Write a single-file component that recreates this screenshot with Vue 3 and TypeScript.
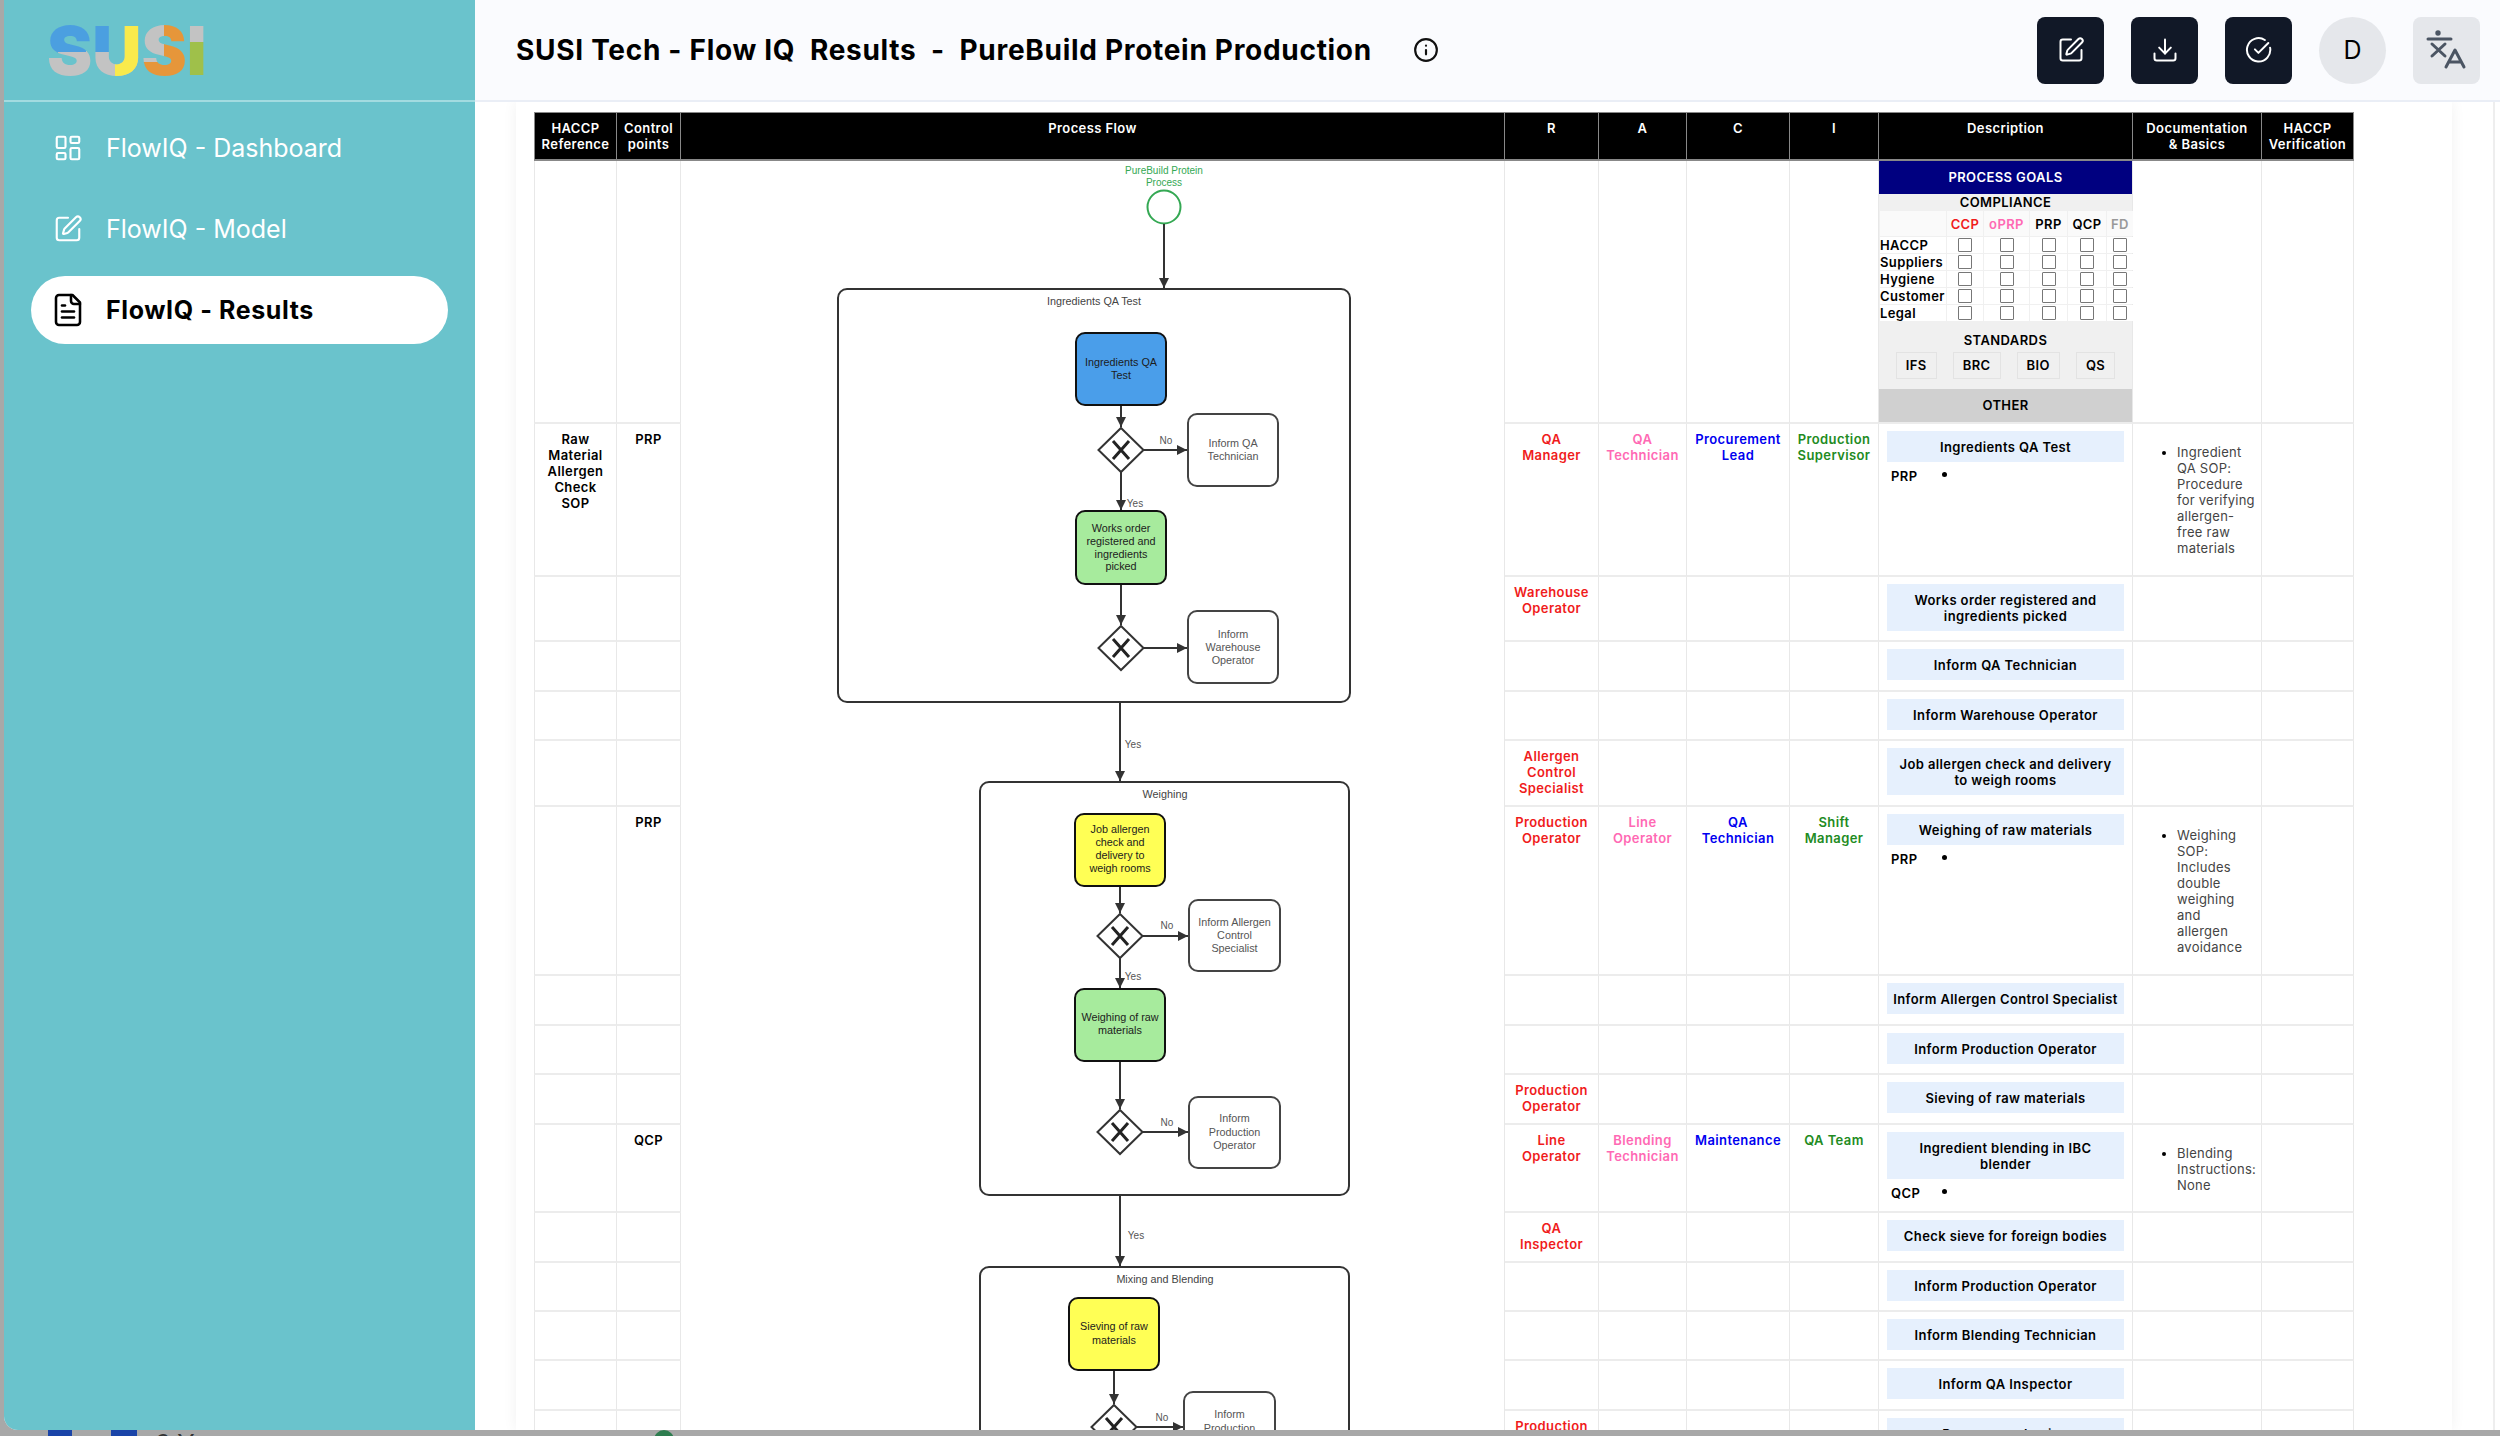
<script setup lang="ts">
interface Row {
  h: number
  haccp?: string
  cp?: string
  r?: string
  a?: string
  c?: string
  i?: string
  desc?: string
  tag?: string
  doc?: string[]
  goals?: boolean
}

interface Shape {
  x: number
  y: number
  w: number
  h: number
  fill: string
  lines: string[]
  ys: number[]
}

const pageTitle = 'SUSI Tech - Flow IQ  Results  -  PureBuild Protein Production'

const rows: Row[] = [
  { h: 262, goals: true },
  {
    h: 153,
    haccp: 'Raw Material Allergen Check SOP',
    cp: 'PRP',
    r: 'QA Manager',
    a: 'QA Technician',
    c: 'Procurement Lead',
    i: 'Production Supervisor',
    desc: 'Ingredients QA Test',
    tag: 'PRP',
    doc: ['Ingredient', 'QA SOP:', 'Procedure', 'for verifying', 'allergen-', 'free raw', 'materials'],
  },
  { h: 65, r: 'Warehouse Operator', desc: 'Works order registered and ingredients picked' },
  { h: 50, desc: 'Inform QA Technician' },
  { h: 49, desc: 'Inform Warehouse Operator' },
  { h: 66, r: 'Allergen Control Specialist', desc: 'Job allergen check and delivery to weigh rooms' },
  {
    h: 169,
    cp: 'PRP',
    r: 'Production Operator',
    a: 'Line Operator',
    c: 'QA Technician',
    i: 'Shift Manager',
    desc: 'Weighing of raw materials',
    tag: 'PRP',
    doc: ['Weighing', 'SOP:', 'Includes', 'double', 'weighing', 'and', 'allergen', 'avoidance'],
  },
  { h: 50, desc: 'Inform Allergen Control Specialist' },
  { h: 49, desc: 'Inform Production Operator' },
  { h: 50, r: 'Production Operator', desc: 'Sieving of raw materials' },
  {
    h: 88,
    cp: 'QCP',
    r: 'Line Operator',
    a: 'Blending Technician',
    c: 'Maintenance',
    i: 'QA Team',
    desc: 'Ingredient blending in IBC blender',
    tag: 'QCP',
    doc: ['Blending', 'Instructions:', 'None'],
  },
  { h: 50, r: 'QA Inspector', desc: 'Check sieve for foreign bodies' },
  { h: 49, desc: 'Inform Production Operator' },
  { h: 49, desc: 'Inform Blending Technician' },
  { h: 50, desc: 'Inform QA Inspector' },
  { h: 60, r: 'Production Operator', desc: 'Process packaging' },
]

const columns = [
  { key: 'haccp', title: 'HACCP Reference', width: 83 },
  { key: 'cp', title: 'Control points', width: 64 },
  { key: 'flow', title: 'Process Flow', width: 824 },
  { key: 'r', title: 'R', width: 94 },
  { key: 'a', title: 'A', width: 88 },
  { key: 'c', title: 'C', width: 103 },
  { key: 'i', title: 'I', width: 89 },
  { key: 'desc', title: 'Description', width: 254 },
  { key: 'doc', title: 'Documentation &\u00a0Basics', width: 129 },
  { key: 'ver', title: 'HACCP Verification', width: 92 },
]

const checkRows = ['HACCP', 'Suppliers', 'Hygiene', 'Customer', 'Legal']
const checkCols = [
  { name: 'CCP', cls: 'ccp' },
  { name: 'oPRP', cls: 'oprp' },
  { name: 'PRP', cls: '' },
  { name: 'QCP', cls: '' },
  { name: 'FD', cls: 'fd' },
]
const standards = ['IFS', 'BRC', 'BIO', 'QS']

const BLUE = '#4a9eea'
const GREEN = '#a7eb9d'
const YELLOW = '#ffff55'

const tasks: Shape[] = [
  { x: 1076, y: 333, w: 90, h: 72, fill: BLUE, lines: ['Ingredients QA', 'Test'], ys: [362, 375] },
  { x: 1188, y: 414, w: 90, h: 72, fill: '#fff', lines: ['Inform QA', 'Technician'], ys: [443, 456] },
  { x: 1076, y: 511, w: 90, h: 73, fill: GREEN, lines: ['Works order', 'registered and', 'ingredients', 'picked'], ys: [528, 541, 554, 566] },
  { x: 1188, y: 611, w: 90, h: 72, fill: '#fff', lines: ['Inform', 'Warehouse', 'Operator'], ys: [634, 647, 660] },
  { x: 1075, y: 814, w: 90, h: 72, fill: YELLOW, lines: ['Job allergen', 'check and', 'delivery to', 'weigh rooms'], ys: [829, 842, 855, 868] },
  { x: 1189, y: 900, w: 91, h: 71, fill: '#fff', lines: ['Inform Allergen', 'Control', 'Specialist'], ys: [922, 935, 948] },
  { x: 1075, y: 989, w: 90, h: 72, fill: GREEN, lines: ['Weighing of raw', 'materials'], ys: [1017, 1030] },
  { x: 1189, y: 1097, w: 91, h: 71, fill: '#fff', lines: ['Inform', 'Production', 'Operator'], ys: [1118, 1132, 1145] },
  { x: 1069, y: 1298, w: 90, h: 72, fill: YELLOW, lines: ['Sieving of raw', 'materials'], ys: [1326, 1340] },
  { x: 1184, y: 1392, w: 91, h: 72, fill: '#fff', lines: ['Inform', 'Production', 'Operator'], ys: [1414, 1428, 1441] },
]

const groups = [
  { x: 838, y: 289, w: 512, h: 413, title: 'Ingredients QA Test', tx: 1094, ty: 301 },
  { x: 980, y: 782, w: 369, h: 413, title: 'Weighing', tx: 1165, ty: 794 },
  { x: 980, y: 1267, w: 369, h: 300, title: 'Mixing and Blending', tx: 1165, ty: 1279 },
]

const diamonds = [
  { x: 1121, y: 450 },
  { x: 1121, y: 648 },
  { x: 1120, y: 936 },
  { x: 1120, y: 1132 },
  { x: 1114, y: 1427 },
]

const arrows = [
  [1164, 224, 1164, 288],
  [1121, 405, 1121, 427],
  [1143, 450, 1187, 450],
  [1121, 472, 1121, 510],
  [1121, 584, 1121, 625],
  [1143, 648, 1187, 648],
  [1120, 702, 1120, 781],
  [1120, 886, 1120, 913],
  [1142, 936, 1188, 936],
  [1120, 958, 1120, 988],
  [1120, 1061, 1120, 1109],
  [1142, 1132, 1188, 1132],
  [1120, 1195, 1120, 1266],
  [1114, 1370, 1114, 1404],
  [1136, 1427, 1183, 1427],
]

const edgeLabels = [
  { x: 1166, y: 440, t: 'No' },
  { x: 1135, y: 503, t: 'Yes' },
  { x: 1133, y: 744, t: 'Yes' },
  { x: 1167, y: 925, t: 'No' },
  { x: 1133, y: 976, t: 'Yes' },
  { x: 1167, y: 1122, t: 'No' },
  { x: 1136, y: 1235, t: 'Yes' },
  { x: 1162, y: 1417, t: 'No' },
]

const flowHeight = rows.reduce((sum, row) => sum + row.h, 0)
</script>

<template>
  <div class="screen">
    <div class="window">
      <aside class="sidebar">
        <div class="logo">
          <span class="l-s1">S</span><span class="l-u">U</span><span class="l-s2">S</span><span class="l-i">I</span>
        </div>
        <nav class="nav">
          <a class="nav-item">
            <svg class="nav-icon" viewBox="0 0 24 24" fill="none" stroke="currentColor" stroke-width="1.700" stroke-linecap="round" stroke-linejoin="round">
              <rect x="3" y="3" width="7" height="9" rx="1" />
              <rect x="14" y="3" width="7" height="5" rx="1" />
              <rect x="14" y="12" width="7" height="9" rx="1" />
              <rect x="3" y="16" width="7" height="5" rx="1" />
            </svg>
            FlowIQ - Dashboard
          </a>
          <a class="nav-item">
            <svg class="nav-icon" viewBox="0 0 24 24" fill="none" stroke="currentColor" stroke-width="1.700" stroke-linecap="round" stroke-linejoin="round">
              <path d="M12 3H5a2 2 0 0 0-2 2v14a2 2 0 0 0 2 2h14a2 2 0 0 0 2-2v-7" />
              <path d="M18.375 2.625a1 1 0 0 1 3 3l-9.013 9.014a2 2 0 0 1-.853.505l-2.873.84a.5.5 0 0 1-.62-.62l.84-2.873a2 2 0 0 1 .506-.852z" />
            </svg>
            FlowIQ - Model
          </a>
          <a class="nav-item active">
            <svg class="nav-icon big" viewBox="0 0 24 24" fill="none" stroke="currentColor" stroke-width="1.700" stroke-linecap="round" stroke-linejoin="round">
              <path d="M15 2H6a2 2 0 0 0-2 2v16a2 2 0 0 0 2 2h12a2 2 0 0 0 2-2V7Z" />
              <path d="M14 2v4a2 2 0 0 0 2 2h4" />
              <path d="M10 9H8" />
              <path d="M16 13H8" />
              <path d="M16 17H8" />
            </svg>
            FlowIQ - Results
          </a>
        </nav>
      </aside>

      <div class="main">
        <header class="header">
          <h1 class="title">{{ pageTitle }}</h1>
          <svg class="info" viewBox="0 0 24 24" fill="none" stroke="#111" stroke-width="2" stroke-linecap="round" stroke-linejoin="round">
            <circle cx="12" cy="12" r="10" />
            <path d="M12 16v-4" />
            <path d="M12 8h.01" />
          </svg>
          <div class="actions">
            <button class="btn">
              <svg viewBox="0 0 24 24" fill="none" stroke="#fff" stroke-width="1.700" stroke-linecap="round" stroke-linejoin="round">
                <path d="M12 3H5a2 2 0 0 0-2 2v14a2 2 0 0 0 2 2h14a2 2 0 0 0 2-2v-7" />
                <path d="M18.375 2.625a1 1 0 0 1 3 3l-9.013 9.014a2 2 0 0 1-.853.505l-2.873.84a.5.5 0 0 1-.62-.62l.84-2.873a2 2 0 0 1 .506-.852z" />
              </svg>
            </button>
            <button class="btn">
              <svg viewBox="0 0 24 24" fill="none" stroke="#fff" stroke-width="1.700" stroke-linecap="round" stroke-linejoin="round">
                <path d="M3 15v4a2 2 0 0 0 2 2h14a2 2 0 0 0 2-2v-4" />
                <path d="M7 10l5 5 5-5" />
                <path d="M12 15V3" />
              </svg>
            </button>
            <button class="btn">
              <svg viewBox="0 0 24 24" fill="none" stroke="#fff" stroke-width="1.700" stroke-linecap="round" stroke-linejoin="round">
                <path d="M21.500 10A10 10 0 1 1 17 3.400" />
                <path d="M8.500 11.500l3 3L20 6" />
              </svg>
            </button>
            <div class="avatar">D</div>
            <button class="btn lang">
              <svg viewBox="0 0 67 67" fill="none" stroke="#4b5563" stroke-width="3" stroke-linecap="round" stroke-linejoin="round">
                <circle cx="25" cy="16" r="1.200" fill="#4b5563" />
                <path d="M15 22h23" />
                <path d="M19 27l13 12M32 27L19 39" />
                <path d="M33 50l9-17 9 17M36.500 45h11" />
              </svg>
            </button>
          </div>
        </header>

        <div class="body">
          <div class="card">
            <table class="grid">
              <colgroup>
                <col v-for="col in columns" :key="col.key" :style="{ width: col.width + 'px' }" />
              </colgroup>
              <thead>
                <tr>
                  <th v-for="col in columns" :key="col.key">{{ col.title }}</th>
                </tr>
              </thead>
              <tbody>
                <tr v-for="(row, idx) in rows" :key="idx" :style="{ height: row.h + 'px' }">
                  <td class="strong">{{ row.haccp }}</td>
                  <td class="strong">{{ row.cp }}</td>
                  <td v-if="idx === 0" :rowspan="rows.length" class="flow">
                    <svg class="chart" width="824" :height="flowHeight" :viewBox="`681 161 824 ${flowHeight}`">
                      <defs>
                        <marker id="head" markerUnits="userSpaceOnUse" markerWidth="11" markerHeight="10" refX="10" refY="5" orient="auto">
                          <path d="M0 0L10 5L0 10Z" fill="#333" />
                        </marker>
                      </defs>
                      <text class="start-label" x="1164" y="170">PureBuild Protein</text>
                      <text class="start-label" x="1164" y="182">Process</text>
                      <circle cx="1164" cy="207" r="16.500" fill="#fff" stroke="#34a853" stroke-width="2" />
                      <g v-for="g in groups" :key="g.title">
                        <rect :x="g.x" :y="g.y" :width="g.w" :height="g.h" rx="9" fill="none" stroke="#333" stroke-width="2" />
                        <text class="group-title" :x="g.tx" :y="g.ty">{{ g.title }}</text>
                      </g>
                      <line
                        v-for="(a, i) in arrows"
                        :key="i"
                        :x1="a[0]"
                        :y1="a[1]"
                        :x2="a[2]"
                        :y2="a[3]"
                        stroke="#333"
                        stroke-width="2"
                        marker-end="url(#head)"
                      />
                      <g v-for="(t, i) in tasks" :key="i">
                        <rect :x="t.x" :y="t.y" :width="t.w" :height="t.h" rx="9" :fill="t.fill" :stroke="t.fill === '#fff' ? '#444' : '#111'" stroke-width="2" />
                        <text
                          v-for="(line, j) in t.lines"
                          :key="j"
                          class="task-text"
                          :class="{ plain: t.fill === '#fff' }"
                          :x="t.x + t.w / 2"
                          :y="t.ys[j]"
                        >{{ line }}</text>
                      </g>
                      <g v-for="(d, i) in diamonds" :key="i">
                        <path :d="`M${d.x} ${d.y - 22}L${d.x + 22.500} ${d.y}L${d.x} ${d.y + 22}L${d.x - 22.500} ${d.y}Z`" fill="#fff" stroke="#333" stroke-width="2" />
                        <path :d="`M${d.x - 8} ${d.y - 9}L${d.x + 8} ${d.y + 9}M${d.x + 8} ${d.y - 9}L${d.x - 8} ${d.y + 9}`" stroke="#222" stroke-width="3" />
                      </g>
                      <text v-for="(l, i) in edgeLabels" :key="i" class="edge" :x="l.x" :y="l.y">{{ l.t }}</text>
                    </svg>
                  </td>
                  <td class="role r">{{ row.r }}</td>
                  <td class="role a">{{ row.a }}</td>
                  <td class="role c">{{ row.c }}</td>
                  <td class="role i">{{ row.i }}</td>
                  <td v-if="row.goals" class="goals-cell">
                    <div class="goals-head">PROCESS GOALS</div>
                    <div class="goals-sub">COMPLIANCE</div>
                    <div class="matrix">
                      <div class="mx head"></div>
                      <div v-for="c in checkCols" :key="c.name" class="mx head" :class="c.cls">{{ c.name }}</div>
                      <template v-for="label in checkRows" :key="label">
                        <div class="mx label">{{ label }}</div>
                        <div v-for="c in checkCols" :key="c.name" class="mx"><span class="check"></span></div>
                      </template>
                    </div>
                    <div class="standards">
                      <div class="standards-title">STANDARDS</div>
                      <div class="chips">
                        <span v-for="s in standards" :key="s" class="chip">{{ s }}</span>
                      </div>
                    </div>
                    <div class="other">OTHER</div>
                  </td>
                  <td v-else class="desc">
                    <div class="desc-box">{{ row.desc }}</div>
                    <div v-if="row.tag" class="tag-row">
                      <span class="tag">{{ row.tag }}</span>
                      <span class="dot"></span>
                    </div>
                  </td>
                  <td class="doc">
                    <ul v-if="row.doc">
                      <li>
                        <span v-for="line in row.doc" :key="line" class="doc-line">{{ line }}</span>
                      </li>
                    </ul>
                  </td>
                  <td></td>
                </tr>
              </tbody>
            </table>
          </div>
          <div class="track"></div>
        </div>
      </div>
    </div>
    <div class="desktop">
      <span class="blue b1"></span>
      <span class="blue b2"></span>
      <span class="peek">9 Y</span>
      <span class="dome"></span>
    </div>
  </div>
</template>

<style>
html,
body {
  margin: 0;
  background: #a8a8a8;
}
</style>

<style scoped>
.screen {
  width: 2500px;
  height: 1436px;
  overflow: hidden;
  background: #a8a8a8;
  font-family: Inter, 'Liberation Sans', sans-serif;
  color: #000;
}

.window {
  display: flex;
  height: 1430px;
  margin-left: 4px;
  overflow: hidden;
  border-bottom-left-radius: 14px;
  background: #fff;
}

.sidebar {
  flex: 0 0 471px;
  background: #6ac3cc;
}

.logo {
  display: flex;
  align-items: center;
  height: 102px;
  padding-left: 43px;
  border-bottom: 2px solid #a3dbe0;
  box-sizing: border-box;
  font-weight: 900;
  font-size: 68px;
  line-height: 1;
}

.logo span {
  color: transparent;
  background-clip: text;
  -webkit-background-clip: text;
  background-repeat: no-repeat;
}

.l-s1 {
  background-image: linear-gradient(178deg, #4b9fe0 53%, #c3c3c3 53%);
}

.l-u {
  background-color: #c3c3c3;
  background-image:
    linear-gradient(#f9ea4c, #f9ea4c),
    linear-gradient(#4b9fe0, #4b9fe0);
  background-size: 54% 100%, 46% 53%;
  background-position: right top, left top;
}

.l-s2 {
  background-color: #e6963a;
  background-image: linear-gradient(#c3c3c3, #c3c3c3);
  background-size: 50% 68%;
  background-position: 0 0;
}

.l-i {
  background-image: linear-gradient(#c3c3c3 38%, #9fc04a 38%);
}

.nav {
  display: flex;
  flex-direction: column;
  gap: 13px;
  padding: 12px 27px 0;
}

.nav-item {
  display: flex;
  align-items: center;
  gap: 25px;
  height: 68px;
  padding-left: 26px;
  border-radius: 34px;
  color: #fff;
  font-size: 25px;
}

.nav-item.active {
  background: #fff;
  color: #000;
  font-weight: 700;
  letter-spacing: 0.6px;
}

.nav-icon {
  flex: 0 0 30px;
  width: 30px;
  height: 30px;
  margin: 0 -2px 0 -4px;
}

.nav-icon.big {
  flex-basis: 36px;
  width: 36px;
  height: 36px;
  margin: 0 -5px 0 -7px;
}

.main {
  flex: 1;
  display: flex;
  flex-direction: column;
  min-width: 0;
}

.header {
  flex: 0 0 102px;
  display: flex;
  align-items: center;
  padding: 0 20px 0 41px;
  box-sizing: border-box;
  border-bottom: 2px solid #eaeef6;
  background: #fafbfe;
}

.title {
  margin: 0;
  font-size: 28px;
  font-weight: 700;
  white-space: pre;
  letter-spacing: 0.7px;
}

.info {
  width: 26px;
  height: 26px;
  margin-left: 41px;
}

.actions {
  margin-left: auto;
  display: flex;
  gap: 27px;
}

.btn {
  display: flex;
  align-items: center;
  justify-content: center;
  width: 67px;
  height: 67px;
  padding: 0;
  border: none;
  border-radius: 8px;
  background: #111827;
}

.btn svg {
  width: 28px;
  height: 28px;
}

.btn.lang {
  background: #e5e7eb;
}

.btn.lang svg {
  width: 67px;
  height: 67px;
}

.avatar {
  display: flex;
  align-items: center;
  justify-content: center;
  width: 67px;
  height: 67px;
  border-radius: 50%;
  background: #e5e7eb;
  font-size: 25px;
}

.body {
  flex: 1;
  display: flex;
  min-height: 0;
  padding-left: 41px;
  overflow: hidden;
}

.card {
  flex: 0 0 1936px;
  padding: 10px 0 0 18px;
  box-sizing: border-box;
  background: #fff;
  box-shadow: 0 0 14px rgba(0, 0, 0, 0.06);
}

.track {
  margin-left: 41px;
  width: 5px;
  border-left: 2px solid #eeeeee;
}

.grid {
  width: 1820px;
  table-layout: fixed;
  border-collapse: separate;
  border-spacing: 0;
  font-size: 13px;
  line-height: 16px;
  letter-spacing: 0.4px;
}

th {
  height: 49px;
  padding: 7px 3px 0;
  box-sizing: border-box;
  vertical-align: top;
  background: #000;
  color: #fff;
  font-weight: 600;
  border: 1px solid #888;
  border-left: 0;
  border-bottom-width: 2px;
}

th:first-child {
  border-left: 1px solid #888;
}

td {
  padding: 0;
  box-sizing: border-box;
  vertical-align: top;
  text-align: center;
  border-right: 1px solid #e8e8e8;
  border-bottom: 2px solid #ececec;
}

td:first-child {
  border-left: 1px solid #e8e8e8;
}

.strong,
.role {
  padding: 7px 8px 0;
  font-weight: 600;
}

.role {
  padding: 7px 7px 0;
}

.r {
  color: #f01c1c;
}

.a {
  color: #ff69b4;
}

.c {
  color: #0000f0;
}

.i {
  color: #228b22;
}

.flow {
  border-bottom: 0;
}

.chart {
  display: block;
}

.chart text {
  font-family: 'Liberation Sans', sans-serif;
  letter-spacing: 0;
  dominant-baseline: central;
  text-anchor: middle;
}

.start-label {
  font-size: 10px;
  fill: #34a853;
}

.group-title {
  font-size: 10.800px;
  fill: #444;
}

.task-text {
  font-size: 10.800px;
  fill: #1c1c1c;
}

.task-text.plain {
  fill: #555;
}

.edge {
  font-size: 10px;
  fill: #555;
}

.desc {
  padding: 7px 8px 0;
  font-weight: 600;
}

.desc-box {
  padding: 7.500px 6px;
  background: #e6f0fd;
}

.tag-row {
  display: flex;
  align-items: center;
  margin-top: 6px;
  padding-left: 4px;
  text-align: left;
}

.tag {
  width: 51px;
}

.dot {
  width: 5px;
  height: 5px;
  margin-top: -3px;
  border-radius: 50%;
  background: #000;
}

.doc {
  text-align: left;
  color: #444;
  font-weight: 400;
  letter-spacing: 0.25px;
}

.doc ul {
  margin: 20px 0 0;
  padding-left: 44px;
}

.doc li::marker {
  color: #000;
}

.doc-line {
  display: block;
  white-space: nowrap;
}

.goals-cell {
  font-weight: 600;
  border-right: 1px solid #e8e8e8;
}

.goals-head {
  height: 33px;
  line-height: 33px;
  background: #000080;
  color: #fff;
}

.goals-sub {
  height: 16px;
  background: #f0f0f0;
}

.matrix {
  display: grid;
  grid-template-columns: 66px 36px 45px 37px 38px 26px;
  grid-template-rows: 25px repeat(5, 16px);
  gap: 1px;
  padding: 1px 1px 1px;
  background: #f0f0f0;
}

.mx {
  display: flex;
  align-items: center;
  justify-content: center;
  background: #fff;
}

.mx.head {
  background: #fafafa;
}

.mx.label {
  justify-content: flex-start;
  white-space: nowrap;
}

.ccp {
  color: #f01c1c;
}

.oprp {
  color: #ff69b4;
}

.fd {
  color: #999;
}

.check {
  width: 14px;
  height: 14px;
  box-sizing: border-box;
  border: 1.500px solid #777;
  border-radius: 1px;
}

.standards {
  height: 67px;
  background: #f0f0f0;
}

.standards-title {
  padding-top: 10px;
}

.chips {
  display: flex;
  justify-content: center;
  gap: 16px;
  margin-top: 4px;
}

.chip {
  padding: 4px 9px;
  height: 17px;
  border: 1px solid #e3e3e3;
}

.other {
  height: 33px;
  line-height: 33px;
  background: #d0d0d0;
}

.desktop {
  position: relative;
  height: 6px;
  overflow: hidden;
}

.blue {
  position: absolute;
  top: 0;
  height: 6px;
  background: #1a44a8;
}

.b1 {
  left: 48px;
  width: 24px;
}

.b2 {
  left: 111px;
  width: 26px;
}

.peek {
  position: absolute;
  left: 156px;
  top: 0;
  font-family: 'Liberation Sans', sans-serif;
  font-size: 26px;
  line-height: 26px;
  color: #333;
}

.dome {
  position: absolute;
  left: 654px;
  top: 0;
  width: 20px;
  height: 20px;
  border-radius: 50%;
  background: #2e7d4f;
}
</style>
